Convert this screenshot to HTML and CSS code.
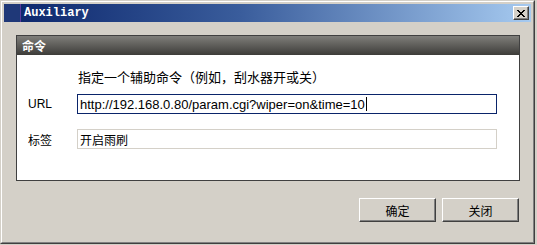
FILE: index.html
```html
<!DOCTYPE html>
<html lang="zh-CN">
<head>
  <meta charset="UTF-8">
  <meta name="viewport" content="width=device-width, initial-scale=1.0">
  <link rel="stylesheet" href="styles.css">
  <title>Auxiliary</title>
</head>
<body>
  <div class="window">
    <div class="window-inner">
      <div class="titlebar">
        <span class="title-icon"></span>
        <span class="title-text">Auxiliary</span>
        <button class="close-btn" aria-label="close">
          <svg width="8" height="7" viewBox="0 0 8 7">
            <path d="M0 0h2v1h1v1h2v-1h1v-1h2v1h-1v1h-1v1h-1v1h1v1h1v1h1v1h-2v-1h-1v-1h-2v1h-1v1h-2v-1h1v-1h1v-1h1v-1h-1v-1h-1v-1h-1z" fill="#000"/>
          </svg>
        </button>
      </div>

      <div class="panel">
        <div class="panel-head">命令</div>
        <div class="panel-body">
          <div class="row row-desc">
            <span class="label"></span>
            <span class="desc">指定一个辅助命令（例如，刮水器开或关）</span>
          </div>
          <div class="row row-field">
            <span class="label label-latin">URL</span>
            <div class="field field-active">http://192.168.0.80/param.cgi?wiper=on&amp;time=10<span class="caret"></span></div>
          </div>
          <div class="row row-field">
            <span class="label">标签</span>
            <div class="field field-cjk">开启雨刷</div>
          </div>
        </div>
      </div>

      <div class="actions">
        <button class="btn">确定</button>
        <button class="btn">关闭</button>
      </div>
    </div>
  </div>
</body>
</html>
```

FILE: styles.css
```css
body {
  margin: 0;
  background: #d4d0c8;
  font-family: "Liberation Sans", "Noto Sans CJK SC", sans-serif;
  font-size: 12px;
  color: #000;
}
.window {
  width: 535px;
  height: 244px;
  box-sizing: border-box;
  border: 1px solid;
  border-color: #d4d0c8 #404040 #404040 #d4d0c8;
}
.window-inner {
  height: 100%;
  box-sizing: border-box;
  border: 1px solid;
  border-color: #fff #808080 #808080 #fff;
  padding: 2px;
  display: flex;
  flex-direction: column;
}
.titlebar {
  height: 18px;
  display: flex;
  align-items: center;
  background: linear-gradient(to right, #0a246a 0%, #3a5d9c 45%, #a6caf0 100%);
}
.title-icon {
  width: 16px;
  height: 18px;
  background: #1f3878;
  border-right: 1px solid #5b3a9c;
}
.title-text {
  margin-left: 3px;
  color: #fff;
  font-family: "Liberation Mono", monospace;
  font-weight: bold;
  font-size: 12px;
}
.close-btn {
  margin-left: auto;
  margin-right: 2px;
  width: 16px;
  height: 14px;
  padding: 0;
  box-sizing: border-box;
  background: #d4d0c8;
  border: 1px solid;
  border-color: #fff #404040 #404040 #fff;
  box-shadow: inset -1px -1px #808080;
  display: flex;
  align-items: center;
  justify-content: center;
}
.close-btn svg {
  display: block;
  shape-rendering: crispEdges;
}
.panel {
  margin: 13px 11px 0 12px;
  height: 146px;
  box-sizing: border-box;
  border: 1px solid #404040;
  display: flex;
  flex-direction: column;
}
.panel-head {
  height: 19px;
  padding-left: 5px;
  display: flex;
  align-items: center;
  background: linear-gradient(to bottom, #7f7e7a, #3d3c39);
  color: #fff;
  font-weight: bold;
  font-size: 12px;
}
.panel-body {
  flex: 1;
  background: #fff;
  padding: 11px 0 0 11px;
}
.row {
  display: flex;
  align-items: center;
  height: 20px;
}
.row-desc {
  margin-bottom: 8px;
}
.row-field + .row-field {
  margin-top: 15px;
}
.label {
  width: 49px;
  flex: none;
}
.desc {
  padding-left: 1px;
  font-size: 13px;
}
.field {
  width: 420px;
  height: 20px;
  box-sizing: border-box;
  border: 1px solid #d4d0c8;
  padding-left: 2px;
  display: flex;
  align-items: center;
  font-size: 13px;
  white-space: nowrap;
}
.field-active {
  border-color: #0a246a;
}
.field-cjk {
  font-size: 12px;
}
.caret {
  width: 1px;
  height: 14px;
  margin-left: 1px;
  background: #000;
}
.actions {
  display: flex;
  justify-content: flex-end;
  gap: 6px;
  margin: 17px 12px 0 0;
}
.btn {
  width: 77px;
  height: 24px;
  box-sizing: border-box;
  background: #d4d0c8;
  border: 1px solid;
  border-color: #fff #404040 #404040 #fff;
  box-shadow: inset -1px -1px #808080;
  font-family: "Noto Sans CJK SC", sans-serif;
  font-size: 12px;
  color: #000;
  padding: 0;
}
```
